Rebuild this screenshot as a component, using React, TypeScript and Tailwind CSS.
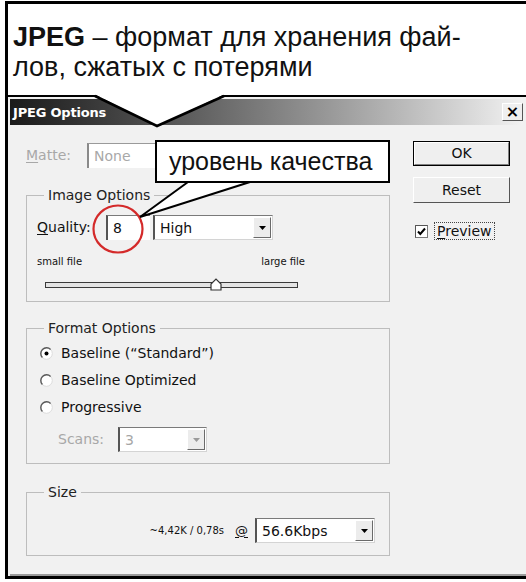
import React from "react";

const Tri = ({ c = "#000" }: { c?: string }) => (
  <svg width="7" height="4" viewBox="0 0 7 4">
    <path d="M0 0H7L3.5 4Z" fill={c} />
  </svg>
);

function Select({ value, w, disabled }: { value: string; w: string; disabled?: boolean }) {
  return (
    <div
      className={
        "flex h-[25px] bg-white border-t border-l-2 border-r border-b border-t-[#7a7a7a] border-l-[#555] border-r-[#d4d4d4] border-b-[#d4d4d4] " +
        w
      }
    >
      <div
        className={
          "flex-1 flex items-center pl-[5px] text-[14px] leading-none " +
          (disabled ? "text-[#a6a6a6]" : "text-[#111]")
        }
      >
        {value}
      </div>
      <div className="w-[18px] my-[1px] mr-[1px] bg-[#ececec] border border-t-white border-l-white border-r-[#6a6a6a] border-b-[#6a6a6a] flex items-center justify-center">
        <Tri c={disabled ? "#9a9a9a" : "#000"} />
      </div>
    </div>
  );
}

function Radio({ checked }: { checked?: boolean }) {
  return (
    <svg width="13" height="13" viewBox="0 0 13 13">
      <circle cx="6.5" cy="6.5" r="5.8" fill="#fff" stroke="#dcdcdc" strokeWidth="1" />
      <path d="M10.6 2.4 A5.8 5.8 0 0 0 2.4 10.6" fill="none" stroke="#5a5a5a" strokeWidth="1.4" />
      {checked && <circle cx="6.5" cy="6.5" r="2" fill="#000" />}
    </svg>
  );
}

function Group({
  title,
  className,
  children,
}: {
  title: string;
  className: string;
  children: React.ReactNode;
}) {
  return (
    <div className={"border border-[#bdbdbd] " + className}>
      <div className="-mt-[9px] ml-[17px] px-[4px] w-fit bg-[#f1f1f1] leading-[17px] text-[14px] text-[#222]">
        {title}
      </div>
      {children}
    </div>
  );
}

export default function App() {
  return (
    <div className="relative w-[526px] h-[582px] bg-white pt-[1px] pl-[5px] overflow-hidden font-['DejaVu_Sans',sans-serif] text-[#111]">
      <div className="w-[521px] h-[578px] border-l-[3px] border-t-[3px] border-b-[3px] border-black flex flex-col">
        {/* callout */}
        <div className="h-[93px] shrink-0 bg-white border-b-2 border-black pl-[5px] pt-[18px] font-['Liberation_Sans',sans-serif] text-[27px] leading-[30px] text-[#111]">
          <div>
            <span className="font-bold">JPEG</span> – формат для хранения фай-
          </div>
          <div>лов, сжатых с потерями</div>
        </div>

        {/* dialog */}
        <div className="flex-1 flex flex-col bg-[#f1f1f1] pt-[2px] pl-[2px]">
          <div className="h-[26px] shrink-0 mr-[3px] bg-gradient-to-r from-[#1b1b1b] to-[#f2f2f2] flex items-center justify-between pl-[3px]">
            <span className="text-white font-bold text-[13px] leading-none tracking-[-0.2px]">JPEG Options</span>
            <div className="w-[21px] h-[18px] bg-[#efefef] border border-t-white border-l-white border-r-[#555] border-b-[#555] flex items-center justify-center text-[16px] font-bold leading-none text-black">
              ×
            </div>
          </div>

          <div className="flex-1 flex border-b-2 border-[#9a9a9a] pl-[16px] pt-[16px]">
            {/* left column */}
            <div className="w-[364px] pt-[2px] flex flex-col">
              <div className="h-[25px] flex items-center text-[14px] text-[#a8a8a8]">
                <span className="w-[61px]">
                  <span className="underline underline-offset-2">M</span>atte:
                </span>
                <div className="w-[110px] h-[25px] bg-white border-t border-l-2 border-t-[#9a9a9a] border-l-[#8a8a8a] flex items-center pl-[5px]">
                  None
                </div>
              </div>

              <Group title="Image Options" className="mt-[27px] pb-[9px]">
                <div className="mt-[11px] h-[25px] flex items-center pl-[10px] text-[14px]">
                  <span className="w-[69px]">
                    <span className="underline underline-offset-2">Q</span>uality:
                  </span>
                  <div className="w-[44px] h-[25px] bg-white border-t border-l-2 border-t-[#7a7a7a] border-l-[#555] flex items-center pl-[5px]">
                    8
                  </div>
                  <Select value="High" w="w-[120px] ml-[3px]" />
                </div>
                <div className="mt-[16px] w-[278px] pl-[10px] flex justify-between text-[10px] leading-[12px]">
                  <span>small file</span>
                  <span>large file</span>
                </div>
                <div className="relative mt-[10px] ml-[18px] w-[253px] h-[14px] flex items-center">
                  <div className="w-full h-[6px] border border-[#3a3a3a] bg-[#e4e4e4]" />
                  <svg className="absolute left-[165px] top-[0px]" width="12" height="13" viewBox="0 0 12 13">
                    <path d="M1 12V6L6 1L11 6V12Z" fill="#fff" stroke="#333" strokeWidth="1.2" />
                  </svg>
                </div>
              </Group>

              <Group title="Format Options" className="mt-[26px] pb-[11px]">
                <div className="mt-[7px] flex flex-col gap-[9px] text-[14px]">
                  <div className="h-[18px] flex items-center pl-[13px]">
                    <Radio checked />
                    <span className="ml-[8px]">Baseline (“Standard”)</span>
                  </div>
                  <div className="h-[18px] flex items-center pl-[13px]">
                    <Radio />
                    <span className="ml-[8px]">Baseline Optimized</span>
                  </div>
                  <div className="h-[18px] flex items-center pl-[13px]">
                    <Radio />
                    <span className="ml-[8px]">Progressive</span>
                  </div>
                </div>
                <div className="mt-[11px] h-[25px] flex items-center pl-[31px] text-[14px]">
                  <span className="w-[60px] text-[#a8a8a8]">Scans:</span>
                  <Select value="3" w="w-[89px]" disabled />
                </div>
              </Group>

              <Group title="Size" className="mt-[28px] pb-[12px]">
                <div className="mt-[17px] h-[25px] flex items-center justify-end pr-[14px]">
                  <span className="text-[10px]">~4,42K / 0,78s</span>
                  <span className="ml-[11px] text-[13px] underline underline-offset-2">@</span>
                  <Select value="56.6Kbps" w="w-[120px] ml-[7px]" />
                </div>
              </Group>
            </div>

            {/* right column */}
            <div className="ml-[23px] w-[97px] flex flex-col text-[14px]">
              <div className="h-[25px] border border-black flex">
                <div className="flex-1 bg-[#efefef] border border-t-white border-l-white border-r-[#808080] border-b-[#808080] flex items-center justify-center">
                  OK
                </div>
              </div>
              <div className="mt-[11px] h-[26px] bg-[#efefef] border border-t-white border-l-white border-r-[#555] border-b-[#555] flex items-center justify-center">
                Reset
              </div>
              <div className="mt-[19px] h-[18px] flex items-center pl-[2px]">
                <svg width="13" height="13" viewBox="0 0 13 13">
                  <rect x="0.5" y="0.5" width="12" height="12" fill="#fff" stroke="#7a7a7a" />
                  <path d="M0.5 12.5V0.5H12.5" fill="none" stroke="#555" strokeWidth="1" />
                  <path d="M3 6.5L5.3 9L10 3.5" fill="none" stroke="#000" strokeWidth="2" />
                </svg>
                <span className="ml-[6px] px-[2px] border border-dotted border-[#444] leading-[16px]">
                  <span className="underline underline-offset-2">P</span>review
                </span>
              </div>
            </div>
          </div>
        </div>
      </div>

      {/* main callout pointer */}
      <svg className="absolute left-0 top-0 pointer-events-none" width="526" height="140" viewBox="0 0 526 140">
        <path d="M95 94.5L157 126L224 94.5Z" fill="#fff" />
        <path d="M95 96L157 126L224 96" fill="none" stroke="#000" strokeWidth="2.5" />
      </svg>

      {/* red circle */}
      <svg className="absolute left-0 top-0 pointer-events-none" width="526" height="300" viewBox="0 0 526 300">
        <ellipse cx="118" cy="229" rx="24.5" ry="23.5" fill="none" stroke="#d42a2a" strokeWidth="2.2" />
      </svg>

      {/* quality callout */}
      <svg className="absolute left-0 top-0 pointer-events-none" width="526" height="300" viewBox="0 0 526 300">
        <path d="M188 181L140 217L250 181Z" fill="#fff" />
        <path d="M188 182L140 217L250 182" fill="none" stroke="#000" strokeWidth="2" />
      </svg>
      <div className="absolute left-[155px] top-[140px] w-[235px] h-[43px] bg-white border-2 border-black flex items-center pl-[12px] font-['Liberation_Sans',sans-serif] text-[25px] leading-none text-[#111]">
        уровень качества
      </div>
    </div>
  );
}
